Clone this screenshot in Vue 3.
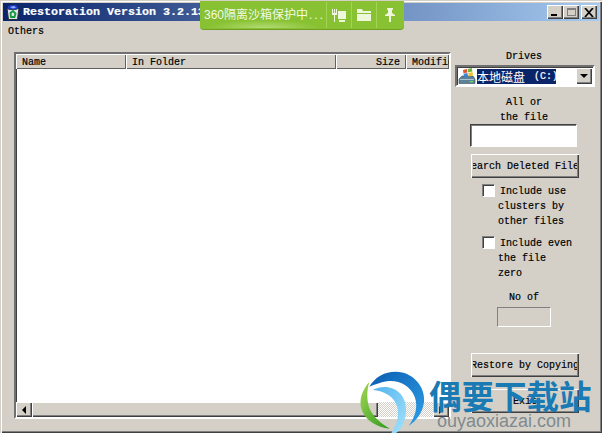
<template>
  <div class="window">
    <div class="titlebar">
      <svg class="app-icon" width="16" height="16" viewBox="0 0 16 16">
        <path d="M2 4h12l-1.500 11.500h-9z" fill="#dfe3ea" stroke="#2a2f3a" />
        <path d="M2 4l2-3 7-.5 3 3.500-3 1.500H4z" fill="#1d3fd0" stroke="#1a1f30" stroke-width=".7" />
        <path d="M5 3l4-1 2 1.500-3 1z" fill="#8fb0ff" />
        <path d="M5.500 9l2.500-2 2.500 2.500-1 3.500H6z" fill="none" stroke="#119a3a" stroke-width="1.800" />
      </svg>
      <span class="title-text">Restoration Version 3.2.13</span>
      <div class="win-buttons">
        <button class="win-btn"><span class="glyph-min"></span></button>
        <button class="win-btn"><span class="glyph-max"></span></button>
        <button class="win-btn close-btn">
          <svg width="10" height="9" viewBox="0 0 10 9"><path d="M1 0l8 9M9 0l-8 9" stroke="#000" stroke-width="1.700" /></svg>
        </button>
      </div>
    </div>

    <div class="menubar">Others</div>

    <div class="content">
      <div class="list-box">
        <div class="list-header">
          <div v-for="col in columns" :key="col.label" class="col" :class="col.align" :style="{ width: col.width + 'px' }">
            {{ col.label }}
          </div>
        </div>
        <div class="list-body"></div>
        <div class="hscroll">
          <div class="scroll-btn"><span class="arrow-left"></span></div>
          <div class="scroll-thumb"></div>
          <div class="scroll-track"></div>
          <div class="scroll-btn"><span class="arrow-right"></span></div>
        </div>
      </div>

      <div class="side">
        <div class="center-label drives-label">Drives</div>
        <div class="combo">
          <svg class="drive-icon" width="18" height="18" viewBox="0 0 18 18">
            <path d="M1 12l3-3h11l2 3v4.500H1z" fill="#5d8199" stroke="#3a4c5c" stroke-width=".6" />
            <path d="M2 12.500h14" stroke="#a9c3d4" />
            <rect x="12" y="14" width="3" height="1.200" fill="#66e066" />
            <path d="M5 3l4-1 .4 3.500-4 .8z" fill="#e0552e" />
            <path d="M9.800 1.900l4-.9.600 3.500-4.200.8z" fill="#6ab53e" />
            <path d="M5.500 6.800l4-.8.400 3.500-3.800.6z" fill="#3d83d8" />
            <path d="M10.300 5.900l4.200-.8.500 3.500-4.300.8z" fill="#eec22e" />
          </svg>
          <span class="combo-value"><span class="combo-cn">本地磁盘</span><span class="combo-letter">(C:)</span></span>
          <div class="combo-btn"><span class="arrow-down"></span></div>
        </div>

        <div class="center-label all-label">All or<br />the file</div>
        <input class="file-input" type="text" />
        <button class="push-btn search-btn"><span class="clip"><span>Search Deleted Files</span></span></button>

        <div class="check-row">
          <span class="check"></span>
          <div class="check-text"><div class="first">Include use</div><div>clusters by</div><div>other files</div></div>
        </div>
        <div class="check-row second">
          <span class="check"></span>
          <div class="check-text"><div class="first">Include even</div><div>the file</div><div>zero</div></div>
        </div>

        <div class="center-label no-label">No of</div>
        <div class="count-box"></div>

        <button class="push-btn restore-btn"><span class="clip"><span>Restore by Copying</span></span></button>
        <button class="push-btn exit-btn"><span class="clip"><span>Exit</span></span></button>
      </div>
    </div>

    <!-- barre du bac à sable, par-dessus la fenêtre -->
    <div class="sandbox">
      <span class="sandbox-text">360隔离沙箱保护中<span class="dots">...</span></span>
      <span class="sandbox-icon">
        <svg width="15" height="15" viewBox="0 0 15 15" fill="#eef6dc">
          <rect x="6" y="3" width="8" height="8" />
          <rect x="7" y="12" width="6" height="2" />
          <path d="M0 1h1v4h1V1h1v4h1V1h1v6H3v7H2V7H0z" />
        </svg>
      </span>
      <span class="sandbox-icon">
        <svg width="14" height="12" viewBox="0 0 14 12" fill="#eef6dc">
          <path d="M0 0h5l1 2h8v2H0zM0 5h14v7H0z" />
        </svg>
      </span>
      <span class="sandbox-icon">
        <svg width="12" height="14" viewBox="0 0 12 14" fill="#eef6dc">
          <path d="M3 0h6v1.500L8 2v3l3 2v1H7v6H5V8H1V7l3-2V2L3 1.500z" />
        </svg>
      </span>
    </div>

    <!-- filigrane du site -->
    <div class="watermark">
      <svg class="wm-logo" width="80" height="68" viewBox="0 0 240 204">
        <defs>
          <linearGradient id="wmBlue" x1="0" y1="0" x2="1" y2="1">
            <stop offset="0" stop-color="#0a5cb0" />
            <stop offset="1" stop-color="#2f9fe8" />
          </linearGradient>
          <linearGradient id="wmLight" x1="0" y1="0" x2="1" y2="1">
            <stop offset="0" stop-color="#4fb4ee" />
            <stop offset="1" stop-color="#a6e2fb" />
          </linearGradient>
          <linearGradient id="wmGreen" x1="0" y1="0" x2="1" y2="1">
            <stop offset="0" stop-color="#a4d654" />
            <stop offset="1" stop-color="#2c9a1c" />
          </linearGradient>
        </defs>
        <path d="M40 62C62 24 104 10 142 20c42 12 66 52 62 88-4 32-22 56-46 72 18-26 30-56 18-88-14-36-52-52-84-46-20 4-36 10-52 16z" fill="url(#wmBlue)" />
        <path d="M50 72c30-16 64-10 84 12 20 24 22 62 4 98-6 10-14 18-24 22l-8-4c16-22 24-50 18-76-8-32-40-50-74-52z" fill="url(#wmLight)" />
        <path d="M40 48C20 70 8 100 16 128c10 34 46 56 86 60-26-14-50-34-62-62-8-24-8-52 0-78z" fill="url(#wmGreen)" />
      </svg>
      <div class="wm-text">
        <div class="wm-cn">偶要下载站</div>
        <div class="wm-en">ouyaoxiazai.com</div>
      </div>
    </div>
  </div>
</template>

<script setup>
const columns = [
  { label: "Name", width: 110, align: "left" },
  { label: "In Folder", width: 210, align: "left" },
  { label: "Size", width: 70, align: "right" },
  { label: "Modified", width: 43, align: "left" },
];
</script>

<style>
html,
body {
  margin: 0;
  padding: 0;
  overflow: hidden;
}
</style>

<style scoped>
.window {
  position: relative;
  width: 602px;
  height: 433px;
  box-sizing: border-box;
  padding: 3px 3px 2px 3px;
  background: #d4d0c8;
  border-top: 1px solid #d4d0c8;
  border-left: 1px solid #d4d0c8;
  box-shadow: inset 1px 1px 0 #fff, inset -1px -1px 0 #404040, inset -2px -2px 0 #808080;
  font-family: "Liberation Mono", monospace;
  font-size: 10px;
  color: #000;
  -webkit-text-stroke: 0.2px currentColor;
  overflow: hidden;
  display: flex;
  flex-direction: column;
}

.titlebar {
  height: 18px;
  margin: -1px 0 0 -1px;
  flex: none;
  display: flex;
  align-items: center;
  background: linear-gradient(90deg, #0a246a 0%, #a6caf0 100%);
  color: #fff;
  padding: 0 2px;
}

.app-icon {
  flex: none;
}

.title-text {
  margin-left: 2px;
  font-weight: bold;
  font-size: 11.67px;
  white-space: nowrap;
}

.win-buttons {
  margin-left: auto;
  display: flex;
}

.win-btn {
  width: 16px;
  height: 14px;
  padding: 0;
  border: 0;
  background: #d4d0c8;
  box-shadow: inset 1px 1px 0 #fff, inset -1px -1px 0 #404040, inset -2px -2px 0 #808080;
  display: flex;
  align-items: center;
  justify-content: center;
  position: relative;
}

.close-btn {
  margin-left: 2px;
}

.glyph-min {
  width: 6px;
  height: 2px;
  background: #000;
  margin-top: 6px;
  margin-right: 2px;
}

.glyph-max {
  width: 9px;
  height: 8px;
  box-sizing: border-box;
  border: 1px solid #808080;
  border-top-width: 2px;
}

.menubar {
  flex: none;
  height: 20px;
  line-height: 21px;
  padding-left: 4px;
}

.content {
  flex: 1;
  min-height: 0;
  display: flex;
}

.list-box {
  width: 437px;
  height: 367px;
  margin: 11px 0 0 10px;
  box-sizing: border-box;
  flex: none;
  border: 2px solid;
  border-color: #707070 #fff #fff #707070;
  box-shadow: inset 1px 1px 0 #404040;
  background: #fff;
  display: flex;
  flex-direction: column;
  overflow: hidden;
}

.list-header {
  display: flex;
  height: 15px;
  flex: none;
  background: #d4d0c8;
  overflow: hidden;
}

.col {
  flex: none;
  box-sizing: border-box;
  line-height: 15px;
  padding: 1px 6px 0;
  white-space: nowrap;
  overflow: hidden;
  box-shadow: inset 1px 1px 0 #fff, inset -1px -1px 0 #606060;
}

.col.right {
  text-align: right;
}

.list-body {
  flex: 1;
}

.hscroll {
  flex: none;
  height: 15px;
  display: flex;
  background-color: #fff;
  background-image: conic-gradient(#d4d0c8 25%, #fff 0 50%, #d4d0c8 0 75%, #fff 0);
  background-size: 2px 2px;
}

.scroll-btn {
  width: 16px;
  flex: none;
  background: #d4d0c8;
  box-shadow: inset 1px 1px 0 #fff, inset -1px -1px 0 #404040, inset -2px -2px 0 #808080;
  display: flex;
  align-items: center;
  justify-content: center;
}

.scroll-thumb {
  width: 346px;
  flex: none;
  background: #d4d0c8;
  box-shadow: inset 1px 1px 0 #fff, inset -1px -1px 0 #404040, inset -2px -2px 0 #808080;
}

.scroll-track {
  flex: 1;
}

.arrow-left {
  border: 4px solid transparent;
  border-left-width: 0;
  border-right-color: #000;
}

.arrow-right {
  border: 4px solid transparent;
  border-right-width: 0;
  border-left-color: #000;
}

.arrow-down {
  border: 4px solid transparent;
  border-bottom-width: 0;
  border-top-color: #000;
}

.side {
  flex: none;
  width: 146px;
  margin-left: 3px;
  position: relative;
  display: flex;
  flex-direction: column;
}

.center-label {
  text-align: center;
  line-height: 15px;
  padding-right: 6px;
}

.drives-label {
  margin-top: 8px;
  height: 15px;
}

.combo {
  width: 140px;
  height: 22px;
  margin: 1px 0 0 1px;
  box-sizing: border-box;
  border: 2px solid;
  border-color: #707070 #fff #fff #707070;
  box-shadow: inset 1px 1px 0 #404040;
  background: #fff;
  display: flex;
  align-items: center;
  padding-left: 1px;
}

.drive-icon {
  flex: none;
}

.combo-value {
  margin-left: 1px;
  background: #0a246a;
  color: #fff;
  width: 79px;
  height: 15px;
  display: flex;
  align-items: center;
  white-space: nowrap;
  overflow: hidden;
}

.combo-cn {
  font-family: "Noto Sans CJK SC", sans-serif;
  font-size: 12px;
  line-height: 15px;
  -webkit-text-stroke: 0;
}

.combo-letter {
  margin-left: 9px;
  line-height: 15px;
}

.combo-btn {
  margin-left: auto;
  width: 16px;
  height: 16px;
  margin-right: 1px;
  background: #d4d0c8;
  box-shadow: inset 1px 1px 0 #fff, inset -1px -1px 0 #404040, inset -2px -2px 0 #808080;
  display: flex;
  align-items: center;
  justify-content: center;
}

.all-label {
  margin-top: 8px;
}

.file-input {
  width: 107px;
  height: 23px;
  box-sizing: border-box;
  margin: -1px 0 0 16px;
  border: 1px solid;
  border-color: #404040 #fff #fff #404040;
  background: #fff;
  outline: none;
  padding: 0;
  box-shadow: inset 1px 1px 0 #808080;
}

.push-btn {
  width: 108px;
  height: 24px;
  margin-left: 17px;
  padding: 0;
  border: 0;
  background: #d4d0c8;
  box-shadow: inset 1px 1px 0 #fff, inset -1px -1px 0 #404040, inset -2px -2px 0 #808080;
  font-family: "Liberation Mono", monospace;
  font-size: 10px;
  color: #000;
  display: flex;
  align-items: center;
  justify-content: center;
  white-space: nowrap;
  flex: none;
}

.clip {
  width: 104px;
  display: flex;
  justify-content: center;
  overflow: hidden;
}

.clip span {
  flex: none;
}

.search-btn {
  margin-top: 7px;
}

.restore-btn {
  margin-top: 26px;
}

.exit-btn {
  margin-top: 12px;
}

.check-row {
  display: flex;
  margin: 4px 0 0 28px;
}

.check-row.second {
  margin-top: 5px;
}

.check {
  width: 13px;
  height: 13px;
  margin-top: 2px;
  box-sizing: border-box;
  flex: none;
  background: #fff;
  border: 1px solid;
  border-color: #808080 #fff #fff #808080;
  box-shadow: inset 1px 1px 0 #404040;
}

.check-text {
  margin-left: 3px;
  padding-top: 2px;
  line-height: 15px;
}

.check-text .first {
  margin-left: 2px;
}

.no-label {
  margin-top: 9px;
}

.count-box {
  width: 54px;
  height: 20px;
  margin: 2px 0 0 43px;
  box-sizing: border-box;
  border: 1px solid;
  border-color: #808080 #fff #fff #808080;
}

.sandbox {
  position: absolute;
  left: 199px;
  top: 0;
  width: 204px;
  height: 28px;
  box-sizing: border-box;
  display: flex;
  align-items: center;
  background: #88c232;
  border-radius: 0 0 4px 4px;
  box-shadow: 0 1px 0 #6e9e22;
  color: #f2f9e4;
  -webkit-text-stroke: 0;
  font-family: "Liberation Sans", "Noto Sans CJK SC", sans-serif;
  font-size: 12px;
}

.sandbox-text {
  width: 127px;
  height: 26px;
  box-sizing: border-box;
  padding-left: 4px;
  line-height: 26px;
  white-space: nowrap;
  overflow: hidden;
  flex: none;
  background: radial-gradient(ellipse 55px 8px at 50% 100%, #b4db75 0%, #88c232 100%);
  border-right: 1px solid #a2d455;
}

.dots {
  letter-spacing: 2px;
  margin-left: 1px;
}

.sandbox-icon {
  width: 25px;
  height: 26px;
  box-sizing: border-box;
  border-right: 1px solid #a2d455;
  display: flex;
  align-items: center;
  justify-content: center;
}

.sandbox-icon:last-child {
  border-right: 0;
}

.watermark {
  position: absolute;
  left: 355px;
  top: 365px;
  display: flex;
  pointer-events: none;
  -webkit-text-stroke: 0;
}

.wm-logo {
  flex: none;
}

.wm-text {
  margin-left: -7px;
  margin-top: 10px;
}

.wm-cn {
  font-family: "Noto Sans CJK SC", sans-serif;
  font-weight: 700;
  font-size: 32.500px;
  line-height: 37px;
  color: #1a7ab4;
  white-space: nowrap;
}

.wm-en {
  font-family: "Liberation Sans", sans-serif;
  font-size: 18px;
  line-height: 18px;
  color: #7f8a8f;
  margin: -1px 0 0 8px;
  white-space: nowrap;
}
</style>
